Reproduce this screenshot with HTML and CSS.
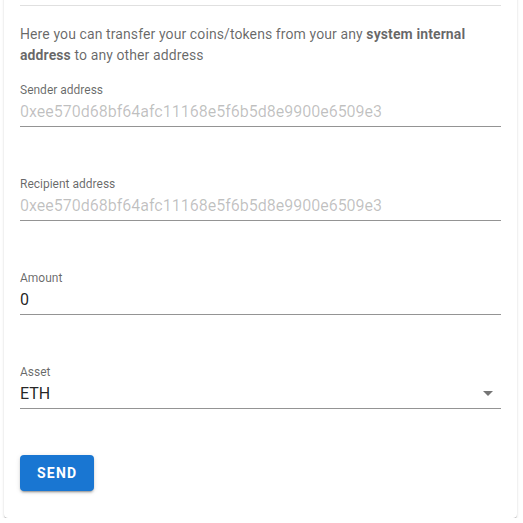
FILE: index.html
```html
<!DOCTYPE html>
<html lang="en">
<head>
    <meta charset="UTF-8">
    <meta name="viewport" content="width=device-width, initial-scale=1.0">
    <title>Transfer</title>
    <link rel="stylesheet" href="styles.css">
</head>
<body>
    <div class="card">
        <hr class="divider">
        <p class="intro">
            Here you can transfer your coins/tokens from your any <b>system internal address</b> to any other address
        </p>

        <div class="field">
            <label class="field-label">Sender address</label>
            <div class="field-value disabled">0xee570d68bf64afc11168e5f6b5d8e9900e6509e3</div>
        </div>

        <div class="field">
            <label class="field-label">Recipient address</label>
            <div class="field-value disabled">0xee570d68bf64afc11168e5f6b5d8e9900e6509e3</div>
        </div>

        <div class="field">
            <label class="field-label">Amount</label>
            <div class="field-value">0</div>
        </div>

        <div class="field">
            <label class="field-label">Asset</label>
            <div class="field-value select">
                <span>ETH</span>
                <svg class="arrow" width="24" height="24" viewBox="0 0 24 24"><path d="M7 10l5 5 5-5z"/></svg>
            </div>
        </div>

        <button class="send-btn">Send</button>
    </div>
</body>
</html>
```

FILE: styles.css
```css
body {
    margin: 0;
    font-family: Roboto, "Liberation Sans", Arial, sans-serif;
    background: #fff;
}

.card {
    margin: -4px 6px 0 4px;
    padding: 9px 16px 27px 16px;
    background: #fff;
    border-radius: 0 0 4px 4px;
    box-shadow: 0 2px 1px -1px rgba(0, 0, 0, 0.2), 0 1px 1px 0 rgba(0, 0, 0, 0.14), 0 1px 3px 0 rgba(0, 0, 0, 0.12);
}

.divider {
    margin: 0;
    border: 0;
    border-top: 1px solid rgba(0, 0, 0, 0.12);
}

.intro {
    margin: 18px 0 0 0;
    font-size: 14px;
    line-height: 21px;
    color: rgba(0, 0, 0, 0.6);
    letter-spacing: 0.1px;
}

.intro b {
    font-weight: 700;
}

.field {
    margin-top: 16px;
    border-bottom: 1px solid rgba(0, 0, 0, 0.42);
    padding-bottom: 4px;
}

.field + .field {
    margin-top: 49px;
}

.field-label {
    display: block;
    font-size: 12px;
    line-height: 16px;
    color: rgba(0, 0, 0, 0.6);
}

.field-value {
    margin-top: 4px;
    font-size: 16px;
    line-height: 20px;
    color: rgba(0, 0, 0, 0.87);
}

.field-value.disabled {
    color: rgba(0, 0, 0, 0.25);
}

.select {
    display: flex;
    justify-content: space-between;
    align-items: center;
    height: 20px;
}

.arrow {
    display: block;
    fill: rgba(0, 0, 0, 0.54);
    margin: -4px 1px -2px 0;
}

.send-btn {
    display: block;
    margin-top: 46px;
    height: 36px;
    min-width: 64px;
    padding: 0 17px;
    border: 0;
    border-radius: 4px;
    background: #1976d2;
    color: #fff;
    font-family: Roboto, "Liberation Sans", Arial, sans-serif;
    font-size: 14px;
    font-weight: 700;
    letter-spacing: 1.25px;
    text-transform: uppercase;
    cursor: pointer;
    box-shadow: 0 3px 1px -2px rgba(0, 0, 0, 0.2), 0 2px 2px 0 rgba(0, 0, 0, 0.14), 0 1px 5px 0 rgba(0, 0, 0, 0.12);
}
```
